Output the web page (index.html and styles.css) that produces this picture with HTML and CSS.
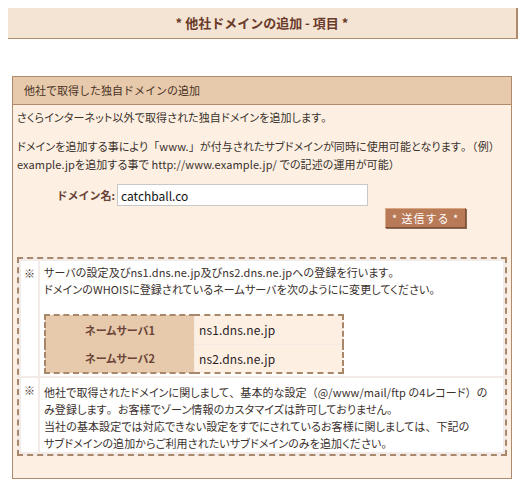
FILE: index.html
```html
<!DOCTYPE html>
<html lang="ja">
<head>
<meta charset="utf-8">
<link rel="stylesheet" href="styles.css">
</head>
<body>
<div class="page-title">* 他社ドメインの追加 - 項目 *</div>

<div class="section">
  <div class="section-head">他社で取得した独自ドメインの追加</div>
  <div class="section-body">
    <p class="para">さくらインターネット以外で取得された独自ドメインを追加します<span class="fw">。</span></p>
    <p class="para">ドメインを追加する事により<span class="fw">「</span>www.<span class="fw">」</span>が付与されたサブドメインが同時に使用可能となります<span class="fw">。（</span>例<span class="fw">）</span><br>example.jpを追加する事で http://www.example.jp/ での記述の運用が可能<span class="fw">）</span></p>

    <div class="form-row">
      <label class="form-label">ドメイン名:</label>
      <input class="form-input" type="text" value="catchball.co">
    </div>
    <div class="btn-row">
      <button class="submit-btn" type="button">* 送信する *</button>
    </div>

    <div class="notes">
      <table class="notes-table">
        <tr>
          <td class="mark">※</td>
          <td class="note">
            サーバの設定及びns1.dns.ne.jp及びns2.dns.ne.jpへの登録を行います<span class="fw">。</span><br>
            ドメインのWHOISに登録されているネームサーバを次のようにに変更してください<span class="fw">。</span>
            <table class="ns-table">
              <tr>
                <th class="ns-label">ネームサーバ1</th>
                <td class="ns-value">ns1.dns.ne.jp</td>
              </tr>
              <tr>
                <th class="ns-label">ネームサーバ2</th>
                <td class="ns-value">ns2.dns.ne.jp</td>
              </tr>
            </table>
          </td>
        </tr>
        <tr>
          <td class="mark">※</td>
          <td class="note note-2">他社で取得されたドメインに関しまして<span class="fw">、</span>基本的な設定<span class="fw">（</span>@/www/mail/ftp の4レコード<span class="fw">）</span>の<br>み登録します<span class="fw">。</span>お客様でゾーン情報のカスタマイズは許可しておりません<span class="fw">。</span><br>当社の基本設定では対応できない設定をすでにされているお客様に関しましては<span class="fw">、</span>下記の<br>サブドメインの追加からご利用されたいサブドメインのみを追加ください<span class="fw">。</span></td>
        </tr>
      </table>
    </div>
  </div>
</div>
</body>
</html>
```

FILE: styles.css
```css
body {
  margin: 8px;
  background: #ffffff;
  font-family: "Noto Sans CJK JP", "Noto Sans", sans-serif;
  font-size: 11px;
  color: #3a302c;
}

.page-title {
  width: 508px;
  height: 30px;
  line-height: 30px;
  background: #f4e4d4;
  border-right: 2px solid #b08a6c;
  border-bottom: 1px solid #b08a6c;
  text-align: center;
  font-size: 13px;
  font-weight: bold;
  color: #6a3a2a;
}

.section {
  margin: 37px 0 0 4px;
  width: 498px;
  border: 1px solid #b08a6c;
  background: #fdf0e3;
}

.section-head {
  height: 27px;
  line-height: 27px;
  padding-left: 11px;
  background: #e6caab;
  border-bottom: 1px solid #b08a6c;
  color: #4a3226;
}

.section-body {
  padding: 3px 4px 22px 4px;
}

.para {
  margin: 0 0 11px 0;
  line-height: 18px;
  white-space: nowrap;
  font-feature-settings: "palt";
  letter-spacing: 0.1px;
}

.fw {
  font-feature-settings: normal;
}

.form-row {
  display: flex;
  align-items: center;
  padding-left: 38px;
}

.form-label {
  width: 60px;
  padding-right: 1px;
  text-align: right;
  white-space: nowrap;
  font-weight: bold;
  color: #6a4438;
}

.form-input {
  box-sizing: border-box;
  width: 251px;
  height: 22px;
  margin: 0 0 0 1px;
  padding: 1px 3px;
  border: 1px solid #c8c8c8;
  background: #ffffff;
  font-family: "Noto Sans CJK JP", "Noto Sans", sans-serif;
  font-size: 12px;
  color: #111111;
}

.btn-row {
  display: flex;
  justify-content: flex-end;
  padding-right: 41px;
  margin-top: 2px;
}

.submit-btn {
  box-sizing: border-box;
  width: 81px;
  height: 20px;
  padding: 0;
  background: #b87a57;
  border: 1px solid;
  border-color: #dba886 #7e5038 #7e5038 #dba886;
  box-shadow: 1px 1px 0 #8b6a58;
  color: #ffffff;
  font-family: "Noto Sans CJK JP", "Noto Sans", sans-serif;
  font-size: 11px;
  letter-spacing: 1px;
}

.notes {
  margin-top: 29px;
  border: 2px dashed #a8876a;
  background: #f3ebe7;
}

.notes-table {
  width: 100%;
  border-spacing: 2px;
  line-height: 17px;
}

.notes-table td {
  background: #ffffff;
  vertical-align: top;
}

.mark {
  width: 12px;
  padding: 4px 2px 0 3px;
  color: #4a3a34;
}

.note {
  padding: 3px 4px 2px 4px;
  white-space: nowrap;
  font-feature-settings: "palt";
  letter-spacing: 0.1px;
}

.note-2 {
  padding: 6px 4px 0 4px;
}

.ns-table {
  margin: 16px 0 0 0;
  border: 2px dashed #a8876a;
  border-collapse: collapse;
  background: #ffffff;
}

.ns-label {
  width: 148px;
  height: 28px;
  padding: 0;
  background: #e6caab;
  text-align: center;
  font-weight: bold;
  color: #6a4438;
}

.notes-table .ns-value {
  box-sizing: border-box;
  width: 148px;
  height: 28px;
  padding: 0 4px;
  background: #fdf0e3;
  border: 1px solid #f4ebe4;
  vertical-align: middle;
  color: #2a2226;
  font-size: 12px;
}
```
